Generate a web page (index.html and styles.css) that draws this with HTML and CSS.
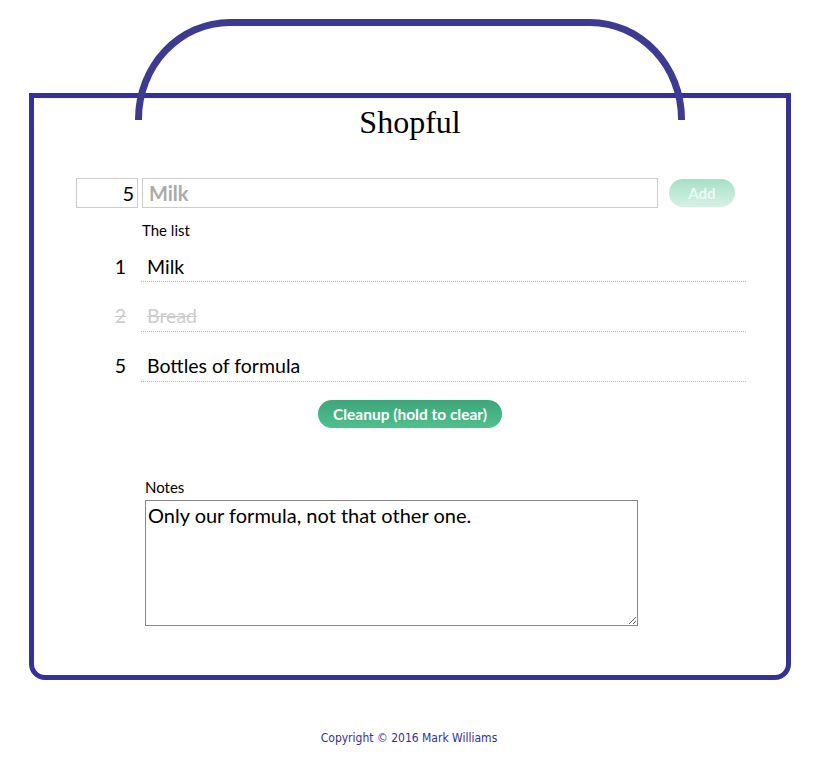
FILE: index.html
```html
<!DOCTYPE html>
<html>
<head>
<meta charset="utf-8">
<title>Shopful</title>
<link rel="stylesheet" href="styles.css">
</head>
<body>
<div class="bag">
  <div class="handle"></div>
  <h1 class="title">Shopful</h1>
  <form class="add-row">
    <input class="qty" type="text" value="5">
    <input class="item" type="text" placeholder="Milk">
    <button class="btn btn-add" type="button">Add</button>
  </form>
  <section class="list">
    <div class="list-label">The list</div>
    <div class="row first"><span class="num">1</span><span class="name">Milk</span></div>
    <div class="row done"><span class="num">2</span><span class="name">Bread</span></div>
    <div class="row"><span class="num">5</span><span class="name">Bottles of formula</span></div>
  </section>
  <div class="cleanup-wrap">
    <button class="btn btn-cleanup" type="button">Cleanup (hold to clear)</button>
  </div>
  <section class="notes">
    <label class="notes-label">Notes</label>
    <textarea class="notes-box">Only our formula, not that other one.</textarea>
  </section>
</div>
<footer class="footer">Copyright © 2016 Mark Williams</footer>
</body>
</html>
```
FILE: styles.css
```css
* { box-sizing: border-box; }
body {
  margin: 0;
  background: #fff;
  font-family: Lato, "Open Sans", sans-serif;
  color: #000;
}
.bag {
  position: relative;
  width: 762px;
  margin: 93px 0 0 29px;
  border: 5px solid #35319a;
  border-radius: 0 0 16px 16px;
  padding: 0 0 49px 0;
}
.handle {
  position: absolute;
  left: 101px;
  top: -79px;
  width: 550px;
  height: 101px;
  border: 7px solid #3d3a91;
  border-bottom: none;
  border-radius: 95px 95px 0 0 / 100px 100px 0 0;
}
.title {
  margin: 4px 0 0;
  text-align: center;
  font-family: "Liberation Serif", serif;
  font-weight: normal;
  font-size: 32px;
  line-height: 40px;
}
.add-row {
  display: flex;
  align-items: center;
  margin: 36px 0 0 42px;
}
.qty, .item {
  height: 30px;
  border: 1px solid #ccc;
  font-family: Lato, sans-serif;
  font-size: 20px;
  padding: 0 3px;
  outline: none;
}
.qty {
  width: 62px;
  text-align: right;
  color: #000;
}
.item {
  width: 516px;
  margin-left: 4px;
  padding-left: 6px;
}
.item::placeholder { color: #aaa; font-weight: bold; }
.btn {
  border: none;
  border-radius: 14px;
  color: #fff;
  font-family: Lato, sans-serif;
  font-weight: bold;
  font-size: 15px;
  height: 28px;
  padding: 0;
}
.btn-add {
  width: 66px;
  margin-left: 11px;
  background: linear-gradient(#a6e0c6, #d6f2e5);
  color: #edf9f3;
}
.list {
  margin: 13px 0 0 47px;
  width: 665px;
}
.list-label {
  padding-left: 61px;
  font-size: 15px;
  line-height: 18px;
}
.row {
  display: flex;
  height: 50px;
  font-size: 19.5px;
  line-height: 24px;
}
.num {
  width: 45px;
  text-align: right;
  padding-top: 22px;
}
.name {
  flex: 1;
  margin-left: 15px;
  padding: 22px 0 0 6px;
  border-bottom: 1px dotted #bbb;
}
.row.first { height: 43px; }
.row.first .num, .row.first .name { padding-top: 16px; }
.row.done { color: #ccc; }
.row.done .num, .row.done .name { text-decoration: line-through; }
.cleanup-wrap {
  display: flex;
  justify-content: center;
  margin-top: 18px;
}
.btn-cleanup {
  width: 184px;
  font-size: 15.5px;
  background: linear-gradient(#3fa57a, #4dc08d);
}
.notes {
  margin: 51px 0 0 111px;
}
.notes-label {
  display: block;
  font-size: 15px;
  line-height: 16px;
  margin-bottom: 5px;
}
.notes-box {
  display: block;
  width: 493px;
  height: 126px;
  border: 1px solid #888;
  font-family: Lato, sans-serif;
  font-size: 20px;
  line-height: 24px;
  padding: 2px;
  resize: both;
}
.footer {
  margin-top: 50px;
  text-align: center;
  font-family: "DejaVu Sans Condensed", "Liberation Sans Narrow", sans-serif;
  font-size: 12px;
  line-height: 16px;
  color: #35319a;
}
```
